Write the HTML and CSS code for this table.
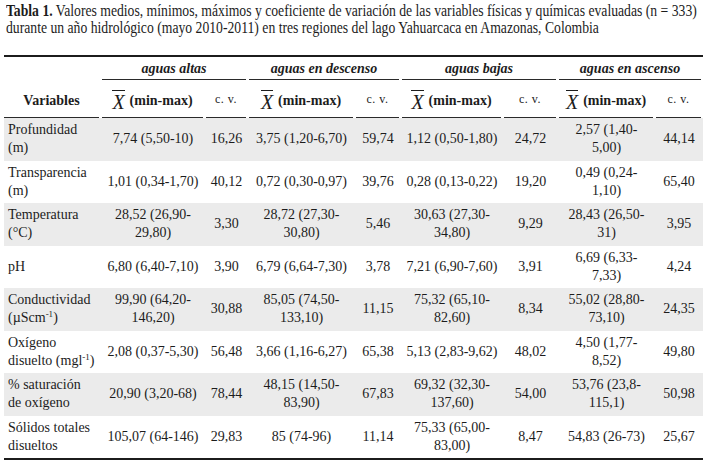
FILE: index.html
```html
<!DOCTYPE html>
<html lang="es">
<head>
<meta charset="utf-8">
<title>Tabla 1</title>
<link rel="stylesheet" href="styles.css">
</head>
<body>
<div class="caption"><b>Tabla 1.</b> Valores medios, mínimos, máximos y coeficiente de variación de las variables físicas y químicas evaluadas (n = 333)<br>durante un año hidrológico (mayo 2010-2011) en tres regiones del lago Yahuarcaca en Amazonas, Colombia</div>
<table class="data">
<colgroup>
<col class="c-var"><col class="c-x1"><col class="c-cv1"><col class="c-x2"><col class="c-cv2"><col class="c-x3"><col class="c-cv3"><col class="c-x4"><col class="c-cv4">
</colgroup>
<thead>
<tr class="groups">
<th></th>
<th colspan="2"><div class="gline">aguas altas</div></th>
<th colspan="2"><div class="gline">aguas en descenso</div></th>
<th colspan="2"><div class="gline">aguas bajas</div></th>
<th colspan="2"><div class="gline">aguas en ascenso</div></th>
</tr>
<tr class="subs">
<th><div class="sline var">Variables</div></th>
<th><div class="sline"><span class="xbar">X</span><span class="mm">(min-max)</span></div></th>
<th><div class="sline cv">c. v.</div></th>
<th><div class="sline"><span class="xbar">X</span><span class="mm">(min-max)</span></div></th>
<th><div class="sline cv">c. v.</div></th>
<th><div class="sline"><span class="xbar">X</span><span class="mm">(min-max)</span></div></th>
<th><div class="sline cv">c. v.</div></th>
<th><div class="sline"><span class="xbar">X</span><span class="mm">(min-max)</span></div></th>
<th><div class="sline cv">c. v.</div></th>
</tr>
</thead>
<tbody>
<tr><td>Profundidad (m)</td><td>7,74 (5,50-<wbr>10)</td><td>16,26</td><td>3,75 (1,20-<wbr>6,70)</td><td>59,74</td><td>1,12 (0,50-<wbr>1,80)</td><td>24,72</td><td>2,57 (1,40-<wbr>5,00)</td><td>44,14</td></tr>
<tr><td>Transparencia (m)</td><td>1,01 (0,34-<wbr>1,70)</td><td>40,12</td><td>0,72 (0,30-<wbr>0,97)</td><td>39,76</td><td>0,28 (0,13-<wbr>0,22)</td><td>19,20</td><td>0,49 (0,24-<wbr>1,10)</td><td>65,40</td></tr>
<tr><td>Temperatura (°C)</td><td>28,52 (26,90-<wbr>29,80)</td><td>3,30</td><td>28,72 (27,30-<wbr>30,80)</td><td>5,46</td><td>30,63 (27,30-<wbr>34,80)</td><td>9,29</td><td>28,43 (26,50-<wbr>31)</td><td>3,95</td></tr>
<tr><td>pH</td><td>6,80 (6,40-<wbr>7,10)</td><td>3,90</td><td>6,79 (6,64-<wbr>7,30)</td><td>3,78</td><td>7,21 (6,90-<wbr>7,60)</td><td>3,91</td><td>6,69 (6,33-<wbr>7,33)</td><td>4,24</td></tr>
<tr><td>Conductividad <span class="unit">(µScm<sup>-1</sup>)</span></td><td>99,90 (64,20-<wbr>146,20)</td><td>30,88</td><td>85,05 (74,50-<wbr>133,10)</td><td>11,15</td><td>75,32 (65,10-<wbr>82,60)</td><td>8,34</td><td>55,02 (28,80-<wbr>73,10)</td><td>24,35</td></tr>
<tr><td>Oxígeno disuelto <span class="unit">(mgl<sup>-1</sup>)</span></td><td>2,08 (0,37-<wbr>5,30)</td><td>56,48</td><td>3,66 (1,16-<wbr>6,27)</td><td>65,38</td><td>5,13 (2,83-<wbr>9,62)</td><td>48,02</td><td>4,50 (1,77-<wbr>8,52)</td><td>49,80</td></tr>
<tr><td>% saturación de oxígeno</td><td>20,90 (3,20-<wbr>68)</td><td>78,44</td><td>48,15 (14,50-<wbr>83,90)</td><td>67,83</td><td>69,32 (32,30-<wbr>137,60)</td><td>54,00</td><td>53,76 (23,8-<wbr>115,1)</td><td>50,98</td></tr>
<tr><td>Sólidos totales disueltos</td><td>105,07 (64-<wbr>146)</td><td>29,83</td><td>85 (74-<wbr>96)</td><td>11,14</td><td>75,33 (65,00-<wbr>83,00)</td><td>8,47</td><td>54,83 (26-<wbr>73)</td><td>25,67</td></tr>
</tbody>
</table>
</body>
</html>
```
FILE: styles.css
```css
html, body {
  margin: 0;
  background: #ffffff;
}
body {
  padding: 0 3px 0 4px;
  font-family: "Liberation Serif", "Times New Roman", serif;
  color: #1c1c1c;
}
.caption {
  font-size: 16px;
  line-height: 17px;
  padding-top: 2px;
  margin-left: 2px;
  white-space: nowrap;
  transform: scaleX(0.855);
  transform-origin: 0 0;
}
.caption b {
  font-weight: bold;
}
.data {
  margin-top: 19px;
  width: 699px;
  table-layout: fixed;
  border-collapse: collapse;
  font-size: 14px;
  line-height: 18px;
}
.c-var { width: 97px; }
.c-x1 { width: 104px; }
.c-cv1 { width: 43px; }
.c-x2 { width: 107px; }
.c-cv2 { width: 46px; }
.c-x3 { width: 102px; }
.c-cv3 { width: 55px; }
.c-x4 { width: 97px; }
.c-cv4 { width: 48px; }

.data th {
  padding: 0;
  font-weight: normal;
}
.groups th {
  border-top: 2px solid #1c1c1c;
}
.gline {
  margin: 0 2px 0 1px;
  height: 22px;
  border-bottom: 1px solid #2a2a2a;
  font-weight: bold;
  font-style: italic;
  font-size: 14px;
  line-height: 24px;
  text-align: center;
}
.sline {
  margin: 0 2px 0 1px;
  height: 38px;
  border-bottom: 1px solid #2a2a2a;
  display: flex;
  align-items: center;
  justify-content: center;
  font-weight: bold;
  padding-top: 4px;
  box-sizing: border-box;
}
.sline.var {
  margin-left: 0;
}
.sline.cv {
  align-items: flex-start;
  padding-top: 10px;
  font-weight: normal;
  font-size: 12px;
  letter-spacing: 0.5px;
}
.xbar {
  font-style: italic;
  font-weight: normal;
  font-size: 20px;
  line-height: 18px;
  border-top: 1.5px solid #1c1c1c;
  padding-top: 2px;
  display: inline-block;
}
.mm {
  margin-left: 5px;
}
.data td {
  height: 42.5px;
  padding: 0 5px;
  text-align: center;
  vertical-align: middle;
}
.data td:first-child {
  text-align: left;
  padding-left: 4px;
}
.data tbody tr:nth-child(odd) {
  background: #ebebeb;
}
.data tbody tr:last-child td {
  border-bottom: 2px solid #1c1c1c;
}
.unit {
  white-space: nowrap;
}
sup {
  font-size: 9px;
  line-height: 0;
  vertical-align: 5px;
}
```
